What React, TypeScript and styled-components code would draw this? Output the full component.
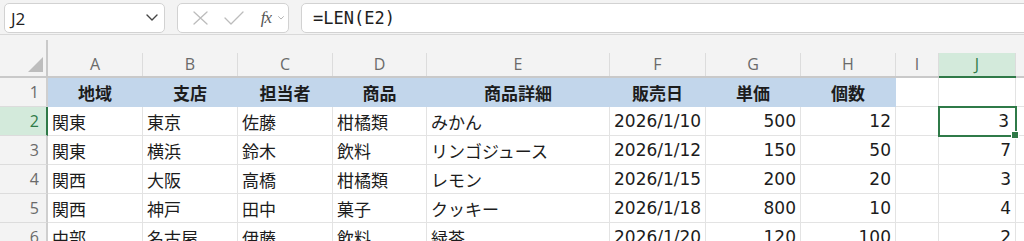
import React from "react";
import styled, { createGlobalStyle, css } from "styled-components";

const GlobalStyle = createGlobalStyle`
  html, body { margin: 0; padding: 0; background: #ffffff; overflow: hidden; }
  * { box-sizing: border-box; }
`;

const GREEN = "#2f7a48";
const GRID = "#e3e3e3";
const HEAD_BG = "#f3f3f3";

const Page = styled.div`
  width: 1024px;
  height: 241px;
  overflow: hidden;
  font-family: "DejaVu Sans", "Noto Sans CJK JP", sans-serif;
`;

const Toolbar = styled.div`
  height: 35px;
  background: ${HEAD_BG};
  border-bottom: 1px solid #d9d9d9;
  display: flex;
  align-items: flex-start;
  padding: 3px 0 0 4px;
  gap: 12px;
`;

const Box = styled.div`
  height: 30px;
  background: #fff;
  border: 1px solid #d2d2d2;
  border-radius: 5px;
  display: flex;
  align-items: center;
`;

const NameBox = styled(Box)`
  width: 161px;
  padding: 0 6px 0 6px;
  justify-content: space-between;
  font-family: "Open Sans", "Liberation Sans", sans-serif;
  font-size: 17px;
  color: #222;
`;

const FxBox = styled(Box)`
  width: 112px;
  padding: 0 0 0 10px;
  gap: 0;
`;

const FormulaBox = styled(Box)`
  flex: 1;
  margin-right: -10px;
  padding-left: 11px;
  font-family: "DejaVu Sans Mono", "Liberation Mono", monospace;
  font-size: 17px;
  color: #1e1e1e;
  border-radius: 5px 0 0 5px;
`;

const IconSlot = styled.span<{ $w: number }>`
  width: ${(p) => p.$w}px;
  display: flex;
  align-items: center;
  justify-content: center;
`;

const FxText = styled.span`
  font-family: "Liberation Serif", serif;
  font-style: italic;
  font-size: 17px;
  color: #555;
  letter-spacing: -1px;
`;

const Sheet = styled.div`
  display: grid;
  grid-template-columns: 48px 95px 95px 95px 94px 183px 96px 95px 95px 43px 77px 1fr;
  grid-template-rows: 43px repeat(6, 29px);
`;

const Corner = styled.div`
  background: ${HEAD_BG};
  border-bottom: 2px solid #c9c9c9;
  display: flex;
  justify-content: flex-end;
  align-items: flex-end;
  padding: 0 5px 4px 0;
  position: relative;
  &::after {
    content: "";
    position: absolute;
    right: 0;
    top: 5px;
    bottom: 0;
    width: 2px;
    background: #c9c9c9;
  }
`;

const Triangle = styled.div`
  width: 0;
  height: 0;
  border-style: solid;
  border-width: 0 0 15px 15px;
  border-color: transparent transparent #bdbdbd transparent;
`;

const ColHead = styled.div<{ $sel?: boolean }>`
  background: ${HEAD_BG};
  border-bottom: 2px solid ${(p) => (p.$sel ? GREEN : "#c9c9c9")};
  display: flex;
  align-items: flex-end;
`;

const ColHeadInner = styled.div<{ $sel?: boolean }>`
  flex: 1;
  height: 23px;
  margin-bottom: 0;
  border-right: 1px solid #dcdcdc;
  background: ${(p) => (p.$sel ? "#d3eadb" : "transparent")};
  color: ${(p) => (p.$sel ? GREEN : "#6a6a6a")};
  font-family: "Open Sans", "Liberation Sans", sans-serif;
  font-size: 16px;
  display: flex;
  align-items: center;
  justify-content: center;
  padding-bottom: 1px;
`;

const RowHead = styled.div<{ $sel?: boolean }>`
  background: ${(p) => (p.$sel ? "#d3eadb" : HEAD_BG)};
  border-right: 2px solid ${(p) => (p.$sel ? GREEN : "#cfcfcf")};
  border-bottom: 1px solid #dcdcdc;
  color: ${(p) => (p.$sel ? GREEN : "#6a6a6a")};
  font-family: "Open Sans", "Liberation Sans", sans-serif;
  font-size: 16px;
  display: flex;
  align-items: center;
  justify-content: flex-end;
  padding-right: 7px;
`;

const Cell = styled.div<{ $head?: boolean; $num?: boolean; $sel?: boolean }>`
  border-right: 1px solid ${GRID};
  border-bottom: 1px solid ${GRID};
  font-size: 17px;
  color: #1c1c1c;
  display: flex;
  align-items: center;
  padding: 0 4px;
  white-space: nowrap;
  overflow: visible;
  position: relative;
  justify-content: ${(p) => (p.$head ? "center" : p.$num ? "flex-end" : "flex-start")};
  ${(p) =>
    p.$head &&
    css`
      background: #c2d6eb;
      border-right-color: #c2d6eb;
      border-bottom-color: #c2d6eb;
      font-weight: bold;
      font-family: "Noto Sans CJK JP", sans-serif;
    `}
  ${(p) =>
    p.$sel &&
    css`
      outline: 2px solid ${GREEN};
      outline-offset: -1px;
      padding-right: 6px;
      z-index: 1;
      &::after {
        content: "";
        position: absolute;
        right: -4px;
        bottom: -4px;
        width: 6px;
        height: 6px;
        background: ${GREEN};
        border: 1px solid #fff;
      }
    `}
`;

const cols = ["A", "B", "C", "D", "E", "F", "G", "H", "I", "J"];
const headers = ["地域", "支店", "担当者", "商品", "商品詳細", "販売日", "単価", "個数"];
const rows: (string | number)[][] = [
  ["関東", "東京", "佐藤", "柑橘類", "みかん", "2026/1/10", 500, 12, "", 3],
  ["関東", "横浜", "鈴木", "飲料", "リンゴジュース", "2026/1/12", 150, 50, "", 7],
  ["関西", "大阪", "高橋", "柑橘類", "レモン", "2026/1/15", 200, 20, "", 3],
  ["関西", "神戸", "田中", "菓子", "クッキー", "2026/1/18", 800, 10, "", 4],
  ["中部", "名古屋", "伊藤", "飲料", "緑茶", "2026/1/20", 120, 100, "", 2],
];

const Chevron = ({ size = 12, color = "#444", stroke = 1.4 }) => (
  <svg width={size} height={size * 0.6} viewBox="0 0 12 7" fill="none">
    <path d="M1 1l5 5 5-5" stroke={color} strokeWidth={stroke} strokeLinecap="round" strokeLinejoin="round" />
  </svg>
);

export default function App() {
  return (
    <Page>
      <GlobalStyle />
      <Toolbar>
        <NameBox>
          <span>J2</span>
          <Chevron />
        </NameBox>
        <FxBox>
          <IconSlot $w={24}>
            <svg width="15" height="14" viewBox="0 0 15 14" fill="none">
              <path d="M1 1l13 12M14 1L1 13" stroke="#bcbcbc" strokeWidth="1.3" strokeLinecap="round" />
            </svg>
          </IconSlot>
          <IconSlot $w={44}>
            <svg width="20" height="14" viewBox="0 0 20 14" fill="none">
              <path d="M1 7l6 6L19 1" stroke="#bcbcbc" strokeWidth="1.3" strokeLinecap="round" strokeLinejoin="round" />
            </svg>
          </IconSlot>
          <IconSlot $w={20}>
            <FxText>fx</FxText>
          </IconSlot>
          <IconSlot $w={10}>
            <Chevron size={6} color="#a0a0a0" stroke={1.6} />
          </IconSlot>
        </FxBox>
        <FormulaBox>=LEN(E2)</FormulaBox>
      </Toolbar>
      <Sheet>
        <Corner>
          <Triangle />
        </Corner>
        {cols.map((c) => (
          <ColHead key={c} $sel={c === "J"}>
            <ColHeadInner $sel={c === "J"}>{c}</ColHeadInner>
          </ColHead>
        ))}
        <ColHead>
          <ColHeadInner />
        </ColHead>

        <RowHead>1</RowHead>
        {headers.map((h) => (
          <Cell key={h} $head>
            {h}
          </Cell>
        ))}
        <Cell />
        <Cell />
        <Cell />

        {rows.map((r, i) => (
          <React.Fragment key={i}>
            <RowHead $sel={i === 0}>{i + 2}</RowHead>
            {r.map((v, j) => (
              <Cell key={j} $num={typeof v === "number"} $sel={i === 0 && j === 9}>
                {v}
              </Cell>
            ))}
            <Cell />
          </React.Fragment>
        ))}
      </Sheet>
    </Page>
  );
}
